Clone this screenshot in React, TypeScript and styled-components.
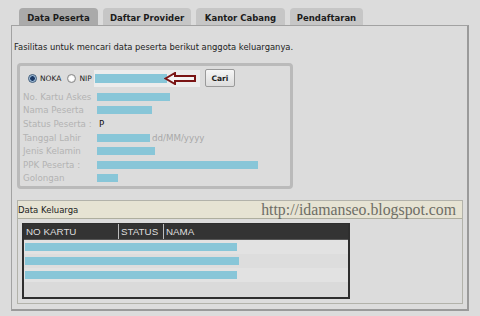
import React from "react";
import styled, { createGlobalStyle } from "styled-components";

const GlobalStyle = createGlobalStyle`
  body {
    margin: 0;
    background: #dcdcdc;
    font-family: "DejaVu Sans", Verdana, sans-serif;
  }
`;

const Page = styled.div`
  width: 480px;
  height: 316px;
  padding: 8px 0 0 11px;
  box-sizing: border-box;
  overflow: hidden;
`;

const TabBar = styled.div`
  display: flex;
  gap: 5px;
  padding-left: 8px;
  height: 17px;
`;

const Tab = styled.div<{ $active?: boolean; $w: number }>`
  width: ${(p) => p.$w}px;
  height: 17px;
  box-sizing: border-box;
  border-radius: 4px 4px 0 0;
  background: ${(p) => (p.$active ? "#aaaaaa" : "#c6c6c6")};
  font-size: 8.5px;
  font-weight: bold;
  color: #1c1c1c;
  display: flex;
  align-items: center;
  justify-content: center;
  padding-top: 2px;
`;

const Panel = styled.div`
  width: 458px;
  height: 286px;
  box-sizing: border-box;
  border: 1px solid #a2a2a2;
  border-right: 2px solid #9a9a9a;
  border-bottom: 2px solid #9a9a9a;
  padding: 14px 0 0 2px;
`;

const Intro = styled.div`
  font-size: 8.4px;
  color: #222;
  height: 14px;
  line-height: 14px;
`;

const SearchBox = styled.div`
  margin: 9px 0 0 3px;
  width: 276px;
  height: 126px;
  box-sizing: border-box;
  border: 3px solid #bababa;
  border-radius: 4px;
  padding: 3px 0 0 3px;
`;

const SearchRow = styled.div`
  display: flex;
  align-items: center;
  height: 18px;
  margin-bottom: 3px;
`;

const Radio = styled.span<{ $checked?: boolean }>`
  width: 9px;
  height: 9px;
  box-sizing: border-box;
  border-radius: 50%;
  margin: 0 3px 0 5px;
  border: 1px solid ${(p) => (p.$checked ? "#3a5878" : "#8a8a8a")};
  background: ${(p) =>
    p.$checked
      ? "radial-gradient(circle, #1d3a66 0 2px, #7fa4c8 2.5px, #dce6f0 4px)"
      : "radial-gradient(circle, #ffffff 0 2px, #d6d6d6 4px)"};
`;

const RadioLabel = styled.span`
  font-size: 7.5px;
  color: #222;
  margin-right: 1px;
`;

const InputBox = styled.div`
  position: relative;
  width: 106px;
  height: 17px;
  margin-left: 1px;
  background: #ececec;
  display: flex;
  align-items: center;
  padding-left: 1px;
  box-sizing: border-box;
`;

const Fill = styled.div<{ $w: number; $h?: number }>`
  width: ${(p) => p.$w}px;
  height: ${(p) => p.$h ?? 8}px;
  background: #88c6d8;
`;

const Arrow = styled.svg`
  position: absolute;
  right: 3px;
  top: 2px;
`;

const CariButton = styled.div`
  margin-left: 5px;
  width: 30px;
  height: 18px;
  box-sizing: border-box;
  border: 1px solid #9a9a9a;
  border-radius: 2px;
  background: linear-gradient(#f6f6f6, #dcdcdc);
  font-size: 7.5px;
  font-weight: bold;
  color: #222;
  display: flex;
  align-items: center;
  justify-content: center;
`;

const FieldRow = styled.div`
  display: flex;
  align-items: center;
  height: 13.6px;
`;

const FieldLabel = styled.span`
  width: 74px;
  font-size: 8.7px;
  color: #b3b3b3;
  white-space: nowrap;
`;

const FieldValue = styled.span<{ $muted?: boolean }>`
  font-size: 8.7px;
  color: ${(p) => (p.$muted ? "#a8a8a8" : "#111")};
  margin-left: 2px;
`;

const Family = styled.div`
  margin: 11px 0 0 3px;
  width: 446px;
  height: 104px;
  box-sizing: border-box;
  border: 1px solid #b2b2aa;
`;

const FamilyHeader = styled.div`
  height: 18px;
  box-sizing: border-box;
  background: #e6e3d3;
  border-bottom: 1px solid #aeae9e;
  display: flex;
  align-items: center;
  justify-content: space-between;
  padding-right: 6px;
`;

const FamilyTitle = styled.span`
  font-size: 8.5px;
  color: #222;
`;

const Watermark = styled.span`
  font-family: "Liberation Serif", "Times New Roman", serif;
  font-size: 15.8px;
  color: #6e6e66;
`;

const Table = styled.div`
  margin: 4px 0 0 4px;
  width: 328px;
  height: 76px;
  box-sizing: border-box;
  border: 2px solid #2e2e2e;
  border-top-width: 1px;
  background: #dadada;
`;

const HeadRow = styled.div`
  display: grid;
  grid-template-columns: 94px 45px 1fr;
  height: 15px;
  background: #333333;
  border-bottom: 1px solid #555;
`;

const HeadCell = styled.div`
  font-family: "Liberation Sans", Arial, sans-serif;
  font-size: 9.8px;
  color: #dedede;
  padding-left: 2px;
  display: flex;
  align-items: center;
  border-left: 1px solid #bdbdbd;
  &:first-child {
    border-left: none;
  }
`;

const BodyRow = styled.div<{ $alt?: boolean }>`
  height: 14px;
  display: flex;
  align-items: center;
  padding-left: 1px;
  background: ${(p) => (p.$alt ? "#e2e2e2" : "#dddddd")};
`;

const fields: { label: string; bar?: number; value?: string }[] = [
  { label: "No. Kartu Askes", bar: 73 },
  { label: "Nama Peserta", bar: 55 },
  { label: "Status Peserta :", value: "P" },
  { label: "Tanggal Lahir" },
  { label: "Jenis Kelamin", bar: 58 },
  { label: "PPK Peserta :", bar: 161 },
  { label: "Golongan", bar: 21 },
];

const App = () => {
  return (
    <Page>
      <GlobalStyle />
      <TabBar>
        <Tab $active $w={79}>Data Peserta</Tab>
        <Tab $w={88}>Daftar Provider</Tab>
        <Tab $w={89}>Kantor Cabang</Tab>
        <Tab $w={73}>Pendaftaran</Tab>
      </TabBar>
      <Panel>
        <Intro>Fasilitas untuk mencari data peserta berikut anggota keluarganya.</Intro>
        <SearchBox>
          <SearchRow>
            <Radio $checked />
            <RadioLabel>NOKA</RadioLabel>
            <Radio />
            <RadioLabel>NIP</RadioLabel>
            <InputBox>
              <Fill $w={72} $h={9} />
              <Arrow width="33" height="13" viewBox="0 0 33 13">
                <path
                  d="M1.5 6.5 L11 1 L11 4 L31 4 L31 9 L11 9 L11 12 Z"
                  fill="#f4f4f4"
                  stroke="#7a1414"
                  strokeWidth="2"
                  strokeLinejoin="miter"
                />
              </Arrow>
            </InputBox>
            <CariButton>Cari</CariButton>
          </SearchRow>
          {fields.map((f) => (
            <FieldRow key={f.label}>
              <FieldLabel>{f.label}</FieldLabel>
              {f.bar && <Fill $w={f.bar} />}
              {f.value && <FieldValue>{f.value}</FieldValue>}
              {!f.bar && !f.value && (
                <>
                  <Fill $w={53} />
                  <FieldValue $muted>dd/MM/yyyy</FieldValue>
                </>
              )}
            </FieldRow>
          ))}
        </SearchBox>
        <Family>
          <FamilyHeader>
            <FamilyTitle>Data Keluarga</FamilyTitle>
            <Watermark>http://idamanseo.blogspot.com</Watermark>
          </FamilyHeader>
          <Table>
            <HeadRow>
              <HeadCell>NO KARTU</HeadCell>
              <HeadCell>STATUS</HeadCell>
              <HeadCell>NAMA</HeadCell>
            </HeadRow>
            <BodyRow $alt>
              <Fill $w={212} />
            </BodyRow>
            <BodyRow>
              <Fill $w={214} />
            </BodyRow>
            <BodyRow $alt>
              <Fill $w={212} />
            </BodyRow>
          </Table>
        </Family>
      </Panel>
    </Page>
  );
};

export default App;
